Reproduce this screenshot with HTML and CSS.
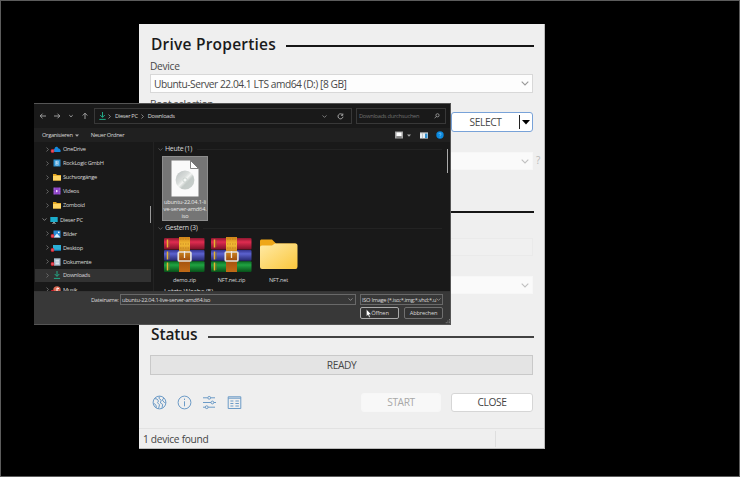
FILE: index.html
```
<!DOCTYPE html>
<html lang="en">
<head>
<meta charset="utf-8">
<title>Drive Properties</title>
<link rel="stylesheet" href="styles.css">
</head>
<body>
<svg class="defs" width="0" height="0">
  <defs>
    <linearGradient id="gold" x2="0" y2="1"><stop offset="0" stop-color="#d08418"/><stop offset=".2" stop-color="#f5bd35"/><stop offset=".65" stop-color="#a2500e"/><stop offset="1" stop-color="#c06a16"/></linearGradient>
    <linearGradient id="red" x2="0" y2="1"><stop offset="0" stop-color="#8e1730"/><stop offset=".35" stop-color="#e02c50"/><stop offset="1" stop-color="#7c1028"/></linearGradient>
    <linearGradient id="blue" x2="0" y2="1"><stop offset="0" stop-color="#32348f"/><stop offset=".35" stop-color="#5c62cf"/><stop offset="1" stop-color="#26286f"/></linearGradient>
    <linearGradient id="green" x2="0" y2="1"><stop offset="0" stop-color="#0b6a24"/><stop offset=".35" stop-color="#20a341"/><stop offset="1" stop-color="#075019"/></linearGradient>
    <linearGradient id="folder" x2="1" y2="1"><stop offset="0" stop-color="#ffeaa6"/><stop offset="1" stop-color="#fbc73c"/></linearGradient>
    <linearGradient id="disc" x2="1" y2="1"><stop offset="0" stop-color="#b9bfbf"/><stop offset=".4" stop-color="#d9dddb"/><stop offset=".5" stop-color="#f0f2f0"/><stop offset=".62" stop-color="#c3cac7"/><stop offset="1" stop-color="#c9cfcd"/></linearGradient>
    <symbol id="rar" viewBox="0 0 41 35">
      <rect y="1" width="40.500" height="11.500" rx="1" fill="url(#red)"/>
      <rect y="13" width="40.500" height="10.800" rx="1" fill="url(#blue)"/>
      <rect y="24.200" width="40.500" height="10.800" rx="1" fill="url(#green)"/>
      <path d="M3.500 2.500v8M3.500 14.500v8M3.500 25.500v8" stroke="#e7b32f" stroke-width="1.500"/>
      <path d="M5.200 3v7M5.200 15v7M5.200 26v7" stroke="#8a6a22" stroke-width=".6"/>
      <rect x="15" width="11" height="35" fill="url(#gold)"/>
      <path d="M16 2h9M16 7h9M16 11h9" stroke="#bd7a1d" stroke-width=".8" stroke-dasharray="1.500 1"/>
      <rect x="14.300" y="15" width="12.600" height="9" rx="1" fill="none" stroke="#e2dfdc" stroke-width="1.700"/>
      <path d="M20.500 14v7" stroke="#efeae4" stroke-width="1.300"/>
    </symbol>
    <symbol id="smallfolder" viewBox="0 0 8 8"><path d="M0 1h3l1 1h4v5.500H0z" fill="#e3a51f"/><path d="M0 2.800h8v4.700H0z" fill="#ffd665"/></symbol>
    <symbol id="chev" viewBox="0 0 8 5"><path d="M.7 .7 4 4 7.300.7" fill="none" stroke="currentColor" stroke-width="1.100"/></symbol>
    <symbol id="right" viewBox="0 0 3 5"><path d="M.5.500 2.400 2.500.5 4.500" fill="none" stroke="currentColor" stroke-width=".8"/></symbol>
    <symbol id="down" viewBox="0 0 7 8"><path d="M3.500 0v5.200M1.200 3l2.300 2.400L5.800 3M.3 7.400h6.400" fill="none" stroke="#22a987" stroke-width="1"/></symbol>
    <symbol id="sync" viewBox="0 0 4 4"><circle cx="2" cy="2" r="2" fill="#d3202f"/><path d="m1.200 1.200 1.600 1.600m0-1.600L1.200 2.800" stroke="#f4b7bb" stroke-width=".5"/></symbol>
  </defs>
</svg>

<main class="desktop">
  <section class="tool">
    <div class="panel">
      <div class="heading drive"><h1>Drive Properties</h1><i></i></div>
      <label class="device-label">Device</label>
      <div class="combo device"><span>Ubuntu-Server 22.04.1 LTS amd64 (D:) [8 GB]</span><svg><use href="#chev"/></svg></div>
      <label class="boot-label">Boot selection</label>
      <div class="boot"><button class="select"><span>SELECT</span><b></b><svg viewBox="0 0 8 5"><path d="M0 0h8L4 4.500z"/></svg></button></div>
      <div class="combo dim partition"><svg><use href="#chev"/></svg><em>?</em></div>
      <div class="heading format"><i></i></div>
      <div class="field"></div>
      <div class="combo dim cluster"><svg><use href="#chev"/></svg></div>
      <div class="heading status"><h1>Status</h1><i></i></div>
      <div class="progress"><span>READY</span></div>
      <div class="actions">
        <div class="icons">
          <svg viewBox="0 0 15 15"><circle cx="7.500" cy="7.500" r="6.400"/><path d="M2.500 3.600 5 4l1.500 2-1 1.800 2 2-1 4M8 1.200l-1.200 2 2.400 2L8.400 8l2.300 1.400-.7 3.500M11.800 3l-1.500 2 2 2.500 1.400.2M1.500 8l2.500 2.200.4 2.500"/></svg>
          <svg viewBox="0 0 15 15"><circle cx="7.500" cy="7.500" r="6.400"/><path d="M7.500 6.300v5M7.500 3.600v1.400"/></svg>
          <svg viewBox="0 0 15 15"><path d="M1 2.800h4.800m2.800 0H13M1 7.500h8m2.800 0H14M1 12.200h2.300m2.800 0H13"/><circle cx="7.200" cy="2.800" r="1.400"/><circle cx="10.400" cy="7.500" r="1.400"/><circle cx="4.700" cy="12.200" r="1.400"/></svg>
          <svg viewBox="0 0 15 15"><path d="M1.200 1.800h12.600v11.700H1.200zM1.200 3.200h12.600M3.400 6h3M3.400 8.500h3M3.400 11h3M8.400 6h3.500M8.400 8.500h3.500M8.400 11h3.500"/></svg>
        </div>
        <button class="start"><span>START</span></button><button class="close"><span>CLOSE</span></button>
      </div>
    </div>
    <footer class="statusbar"><span>1 device found</span></footer>
  </section>

  <section class="dialog">
    <div class="nav">
      <div class="arrows">
        <svg viewBox="0 0 8 8"><path d="M7 4H1.300M3.500 1.700 1.200 4l2.300 2.300"/></svg>
        <svg viewBox="0 0 8 8"><path d="M1 4h5.700M4.500 1.700 6.800 4 4.500 6.300"/></svg>
        <svg viewBox="0 0 8 8"><path d="m2.300 3.200 1.700 1.600 1.700-1.600"/></svg>
        <svg viewBox="0 0 8 8"><path d="M4 7V1.300M1.700 3.500 4 1.200l2.300 2.300"/></svg>
      </div>
      <div class="address">
        <svg class="dl"><use href="#down"/></svg><svg class="r"><use href="#right"/></svg><span class="crumb-pc">Dieser PC</span><svg class="r"><use href="#right"/></svg><span class="crumb-dl">Downloads</span>
        <svg class="c"><use href="#chev"/></svg>
        <svg class="reload" viewBox="0 0 7 7"><path d="M5.500 1.800A2.500 2.500 0 1 0 6 3.700M5.800.5v1.800H4"/></svg>
      </div>
      <div class="search"><span>Downloads durchsuchen</span><svg viewBox="0 0 6 6"><circle cx="3.500" cy="2.300" r="1.600"/><path d="M2.300 3.500.6 5.300"/></svg></div>
    </div>
    <div class="toolbar">
      <span class="organize">Organisieren</span><svg class="tri" viewBox="0 0 4 3"><path d="M0 .5h4L2 2.800z"/></svg><span class="newdir">Neuer Ordner</span>
      <svg class="view" viewBox="0 0 8 8"><path d="M0 .5h8v7H0z" fill="#a3a3a3"/><path d="M1.500 1.500h5v3.700h-5z" fill="#fff"/><path d="M1.500 6h5" stroke="#444" stroke-width=".7"/></svg>
      <svg class="tri view-tri" viewBox="0 0 4 3"><path d="M0 .5h4L2 2.800z"/></svg>
      <svg class="pane" viewBox="0 0 8 7"><path d="M0 .5h8v6H0z" fill="#e8eef2"/><path d="M5 1.500h2.500v4.500H5z" fill="#318fcf"/><path d="M2.500 1.500v5M0 1h8" stroke="#999" stroke-width=".5"/></svg>
      <svg class="help" viewBox="0 0 8 8"><circle cx="4" cy="4" r="3.700" fill="#0a88dd"/><path d="M2.900 3.100c.1-1.400 2.300-1.300 2.200 0C5 4 4 3.900 4 4.900M4 5.700v.8" fill="none" stroke="#8fd2ff" stroke-width=".7"/></svg>
    </div>
    <div class="browser">
      <nav class="tree">
        <div class="row"><svg class="r"><use href="#right"/></svg><svg class="ic" viewBox="0 0 12 8"><path d="M5.500 7C3.500 7 3.500 4 5.500 4 5.800 1.500 8.500 1 9.500 3.500c2-.3 3 3.500 1.500 3.500z" fill="#1689dd"/><use href="#sync" x="1.500" y="4" width="4" height="4"/></svg><span>OneDrive</span></div>
        <div class="row"><svg class="r"><use href="#right"/></svg><svg class="ic" viewBox="0 0 12 8"><path d="M4.500.5h7v7h-7z" fill="#2b91d0"/><path d="M6.500 1.800h3v4.600h-3z" fill="#cceaff"/><path d="M7.500 3H9M7.200 5.200h2" stroke="#287fb6" stroke-width=".8"/></svg><span>RockLogic GmbH</span></div>
        <div class="row"><svg class="r"><use href="#right"/></svg><svg class="ic" viewBox="0 0 12 8"><use href="#smallfolder" x="4" width="8" height="8"/></svg><span>Suchvorgänge</span></div>
        <div class="row"><svg class="r"><use href="#right"/></svg><svg class="ic" viewBox="0 0 12 8"><path d="M4.500.5h7v7h-7z" fill="#8f45c9"/><path d="M5.200.8v6.600M10.800.8v6.600" stroke="#c697ed" stroke-width=".6" stroke-dasharray=".8"/><path d="m7 2.700 2.300 1.400L7 5.500z" fill="#f3ddff"/></svg><span>Videos</span></div>
        <div class="row"><svg class="r"><use href="#right"/></svg><svg class="ic" viewBox="0 0 12 8"><use href="#smallfolder" x="4" width="8" height="8"/></svg><span>Zomboid</span></div>
        <div class="row root"><svg class="c"><use href="#chev"/></svg><svg class="ic" viewBox="0 0 8 8"><path d="M.3 1h7.400v5H.3z" fill="#1badcb"/><path d="M3.300 6h1.400v1H3.300zM2 7h4v.6H2z" fill="#bccdd1"/></svg><span>Dieser PC</span></div>
        <div class="row"><svg class="r"><use href="#right"/></svg><svg class="ic" viewBox="0 0 12 8"><path d="M4.500.5h7v7h-7z" fill="#2689d5"/><path d="m4.500 7.500 3.500-4 3.500 4z" fill="#d7efff"/><circle cx="9.800" cy="2.400" r=".8" fill="#fff"/><use href="#sync" x="1.500" y="4" width="4" height="4"/></svg><span>Bilder</span></div>
        <div class="row"><svg class="r"><use href="#right"/></svg><svg class="ic" viewBox="0 0 12 8"><path d="M4 1h8v6H4z" fill="#2baed5"/><path d="M4 5.800h8V7H4z" fill="#126fa0"/><use href="#sync" x="1.500" y="4" width="4" height="4"/></svg><span>Desktop</span></div>
        <div class="row"><svg class="r"><use href="#right"/></svg><svg class="ic" viewBox="0 0 12 8"><path d="M5 .3h6.500v7.400H5z" fill="#a6bacb"/><path d="M6.500 2.300H10M6.500 4H10M6.500 5.700H10" stroke="#f4f8fb" stroke-width=".8"/><use href="#sync" x="1.500" y="4" width="4" height="4"/></svg><span>Dokumente</span></div>
        <div class="row active"><svg class="r"><use href="#right"/></svg><svg class="ic" viewBox="0 0 12 8"><use href="#down" x="4.500" width="7" height="8"/></svg><span>Downloads</span></div>
        <div class="row"><svg class="r"><use href="#right"/></svg><svg class="ic" viewBox="0 0 12 8"><circle cx="8" cy="4" r="3.700" fill="#db6a55"/><path d="M8 5.500V2l2 .6" stroke="#fff" fill="none"/><use href="#sync" x="1.500" y="4" width="4" height="4"/></svg><span>Musik</span></div>
      </nav>
      <div class="treescroll"><i></i></div>
      <div class="files">
        <div class="group g1"><svg><use href="#chev"/></svg><span>Heute (1)</span><i></i></div>
        <div class="iso">
          <svg viewBox="0 0 28 37"><path d="M.5.500h19L27.500 8.500v28H.5z" fill="#fafafa"/><path d="M19.500.500v8h8z" fill="#fff" stroke="#656565" stroke-width=".8"/><circle cx="14" cy="20" r="9.400" fill="url(#disc)"/><circle cx="14" cy="20" r="2" fill="#f5f7f5" stroke="#b9c5c0" stroke-width=".6"/></svg>
          <span>ubuntu-22.04.1-li</span><span>ve-server-amd64.</span><span>iso</span>
        </div>
        <div class="group g2"><svg><use href="#chev"/></svg><span>Gestern (3)</span><i></i></div>
        <div class="items">
          <div class="item"><svg><use href="#rar"/></svg><span>demo.zip</span></div>
          <div class="item"><svg><use href="#rar"/></svg><span>NFT.net.zip</span></div>
          <div class="item"><svg viewBox="0 0 41 35"><path d="M2 4.500C2 3 2.500 2.500 4 2.500h10l4 4h19q2 0 2 2v20H2z" fill="#efa719"/><path d="M2 10q0-1.500 2-1.500h10l3-2h20.500q2 0 2 2v21q0 2.500-2 2.500H4q-2 0-2-2z" fill="url(#folder)"/></svg><span>NFT.net</span></div>
        </div>
        <div class="group g3"><span>Letzte Woche (5)</span></div>
      </div>
      <div class="filescroll"><i></i></div>
    </div>
    <div class="bottom">
      <div class="line1"><span class="namelabel">Dateiname:</span><div class="name"><span>ubuntu-22.04.1-live-server-amd64.iso</span><svg class="c"><use href="#chev"/></svg></div><div class="type"><span>ISO Image (*.iso;*.img;*.vhd;*.u</span><svg class="c"><use href="#chev"/></svg></div></div>
      <div class="line2"><button class="open"><span>Öffnen</span></button><button><span>Abbrechen</span></button></div>
      <svg class="cursor" viewBox="0 0 6 9"><path d="M.4.300v7L2 5.900l1.100 2.600 1.200-.5-1.100-2.500h2.200z" fill="#fff" stroke="#222" stroke-width=".4"/></svg>
      <svg class="grip" viewBox="0 0 6 6"><path d="M5.500 0v6M3.500 2v4M1.500 4v2" stroke="#aaa" stroke-width="1" stroke-dasharray="1"/></svg>
    </div>
  </section>
</main>
</body>
</html>
```
FILE: styles.css
```
* { box-sizing: border-box; }
body { margin: 0; background: #000; font-family: "Open Sans", "Noto Sans", sans-serif; }
svg { display: block; flex: none; }
span { white-space: nowrap; }
button { margin: 0; padding: 0; font: inherit; color: inherit; letter-spacing: inherit; }
.defs { position: absolute; }
.desktop { position: relative; width: 740px; height: 477px; border: 1px solid #5c5c5c; overflow: hidden; }

/* formatting tool window */
.tool { position: absolute; left: 138px; top: 23px; width: 406px; height: 425px; display: flex; flex-direction: column; background: #efefef; border: 1px solid #bbb; border-width: 0 1px 1px 0; color: #484848; font-size: 10.2px; letter-spacing: -.4px; }
.panel { flex: 1; display: flex; flex-direction: column; padding: 10px 11px 0; }
.heading { display: flex; align-items: center; gap: 10px; height: 20px; margin-right: -1px; }
.heading h1 { margin: 0; font-size: 15.5px; line-height: 20px; font-weight: 600; color: #1b1b1b; white-space: nowrap; padding-left: 1px; }
.heading i { flex: 1; height: 2px; background: #161616; margin-top: 4px; }
.drive h1 { width: 126px; letter-spacing: .22px; }
.status { margin-top: 30px; }
.status h1 { width: 48px; letter-spacing: -.1px; }
.status i { background: #424242; margin-top: 5px; }
.format { margin-top: 30px; }
label { line-height: 14px; height: 14px; letter-spacing: -.3px; }
.device-label { margin-top: 5px; }
.combo { position: relative; display: flex; align-items: center; height: 19px; margin-top: 1px; padding: 0 3px; background: #fdfdfd; border: 1px solid #d8d8d8; }
.combo span { flex: 1; letter-spacing: -.46px; }
.combo svg { width: 8px; height: 5px; color: #999; margin-left: auto; }
.boot-label { margin-top: 4px; }
.boot { display: flex; justify-content: flex-end; margin-top: 1px; }
.select { display: flex; align-items: center; width: 82px; height: 20px; background: #fff; border: 1px solid #78a2d8; border-radius: 3px; }
.select span { flex: 1; text-align: center; }
.select b { width: 1px; height: 14px; background: #222; }
.select svg { width: 8px; height: 5px; margin: 0 2px; fill: #000; }
.dim { height: 18px; margin-top: 20px; background: #fafafa; border-color: #f7f7f7; }
.dim svg { color: #c0c0c0; }
.combo em { position: absolute; left: 385px; top: 0; font-style: normal; color: #b8b8b8; font-size: 10px; }
.field { height: 18px; margin-top: 18px; border: 1px solid #eaeaea; background: #f0f0f0; }
.cluster { margin-top: 20px; }
.progress { display: flex; align-items: center; justify-content: center; height: 20px; margin-top: 11px; background: #e4e4e4; border: 1px solid #c9c9c9; }
.actions { display: flex; align-items: center; margin-top: 17px; height: 20px; }
.icons { display: flex; gap: 10px; margin: 0 auto 0 2px; }
.icons svg { width: 15px; height: 15px; fill: none; stroke: #6c9bc7; stroke-width: 1; }
.start, .close { height: 19px; border-radius: 3px; }
.start { width: 80px; margin-right: 10px; border: 1px solid #f7f7f7; background: #f8f8f8; color: #a8a8a8; }
.close { width: 82px; background: #fff; border: 1px solid #d6d6d6; color: #444; }
.statusbar { display: flex; align-items: center; height: 20px; padding-left: 4px; border-top: 1px solid #e2e2e2; color: #454545; letter-spacing: -.3px; }
.statusbar::after { content: ""; width: 48px; height: 16px; margin-left: auto; border-left: 1px solid #dedede; }

/* file picker window */
.dialog { position: absolute; left: 33px; top: 102px; width: 417px; height: 222px; display: flex; flex-direction: column; background: #191919; border: 1px solid #555; border-width: 1px 1px 1px 0; color: #d8d8d8; font-size: 5.7px; letter-spacing: -.3px; line-height: 8px; overflow: hidden; }
.dialog svg { fill: none; }
.dialog .r { width: 3px; height: 5px; color: #a0a0a0; }
.dialog .c { flex: none; width: 5px; height: 3px; color: #b0b0b0; }
.nav { display: flex; align-items: center; height: 24px; padding: 0 4px 0 5px; }
.arrows { display: flex; gap: 6px; width: 55px; }
.arrows svg { width: 8px; height: 8px; stroke: #bbb; stroke-width: .8; }
.address { display: flex; align-items: center; width: 258px; height: 16px; border: 1px solid #383838; padding: 0 7px 0 4px; }
.address .dl { width: 7px; height: 8px; margin-right: 2px; }
.address span { margin: 0 3px 0 4px; }
.address .c { margin-left: auto; }
.reload { width: 7px; height: 7px; margin-left: 10px; stroke: #c4c4c4; stroke-width: .8; }
.search { display: flex; align-items: center; justify-content: space-between; width: 90px; height: 16px; margin-left: 4px; border: 1px solid #383838; padding: 0 5px 0 2px; color: #707070; letter-spacing: -.26px; }
.search svg { width: 6px; height: 6px; stroke: #b8b8b8; stroke-width: .7; }
.toolbar { display: flex; align-items: center; height: 14px; padding: 0 6px 0 8px; background: #202020; }
.tri { width: 4px; height: 3px; }
.dialog .tri { fill: #aaa; margin-left: 2px; }
.newdir { margin-left: 12px; }
.view { width: 8px; height: 8px; margin-left: auto; }
.dialog .view-tri { margin-left: 4px; }
.pane { width: 8px; height: 7px; margin-left: 9px; }
.help { width: 8px; height: 8px; margin-left: 8px; }
.browser { flex: none; display: flex; height: 149px; overflow: hidden; }
.tree { width: 115px; }
.row { display: flex; align-items: center; height: 14.1px; padding-left: 12px; }
.row .r { color: #777; }
.row .ic { width: 12px; height: 8px; margin: 0 2px 0 0; }
.row.root { padding-left: 7px; }
.row.root .ic { width: 8px; margin: 0 2px 0 3px; }
.row.root .c { margin-left: 1px; }
.active { background: #323232; height: 13px; margin: 0 -2px 1px 1px; padding-left: 11px; }
.treescroll { width: 5px; border-right: 1px solid #232323; }
.treescroll i { display: block; width: 1px; height: 17px; margin: 64px 0 0 1px; background: #999; }
.files { flex: 1; padding-left: 4px; font-size: 5.6px; letter-spacing: -.15px; }
.group { display: flex; align-items: center; height: 12px; font-size: 7px; letter-spacing: -.3px; }
.group svg { width: 5px; height: 3px; margin-right: 2px; color: #777; }
.group i { flex: 1; height: 1px; margin: 0 5px; background: #232323; }
.g1 { margin-top: 1px; }
.iso { display: flex; flex-direction: column; align-items: center; width: 46px; height: 65px; margin: 1px 0 0 4px; padding-top: 4px; background: #757575; border: 1px solid #8d8d8d; color: #e7e7e7; }
.iso span { line-height: 6.8px; }
.iso svg { width: 28px; height: 37px; margin: -1px 0 2px; }
.g2 { margin-top: 1px; }
.items { display: flex; gap: 6px; margin: 3px 0 0 6px; }
.item { display: flex; flex-direction: column; align-items: center; width: 41px; }
.item svg { width: 41px; height: 35px; margin-bottom: 4px; }
.g3 { margin: 2px 0 0 6px; }
.filescroll { width: 3px; }
.filescroll i { display: block; width: 1px; height: 24px; margin-top: 7px; background: #aaa; }
.bottom { position: relative; flex: 1; background: #383838; padding-top: 2px; border-top: 1px solid #343434; }
.line1 { display: flex; align-items: center; height: 11px; }
.namelabel { flex: none; width: 28px; margin-left: 57px; }
.name, .type { flex: none; display: flex; align-items: center; justify-content: space-between; height: 11px; border: 1px solid #696969; padding: 0 2px 0 1px; }
.name { width: 236px; margin-left: 1px; }
.type { width: 83px; margin-left: 4px; letter-spacing: -.3px; }
.line2 { display: flex; justify-content: flex-end; gap: 5px; margin: 2px 7px 0 0; }
.line2 button { width: 39px; height: 12px; background: #333; border: 1px solid #707070; border-radius: 2px; line-height: 8px; letter-spacing: -.15px; }
.line2 .open { border-color: #aaa; padding-left: 1px; }
.cursor { position: absolute; left: 332px; top: 17px; width: 6px; height: 9px; }
.grip { position: absolute; right: 0; bottom: 0; width: 5px; height: 5px; }
```
